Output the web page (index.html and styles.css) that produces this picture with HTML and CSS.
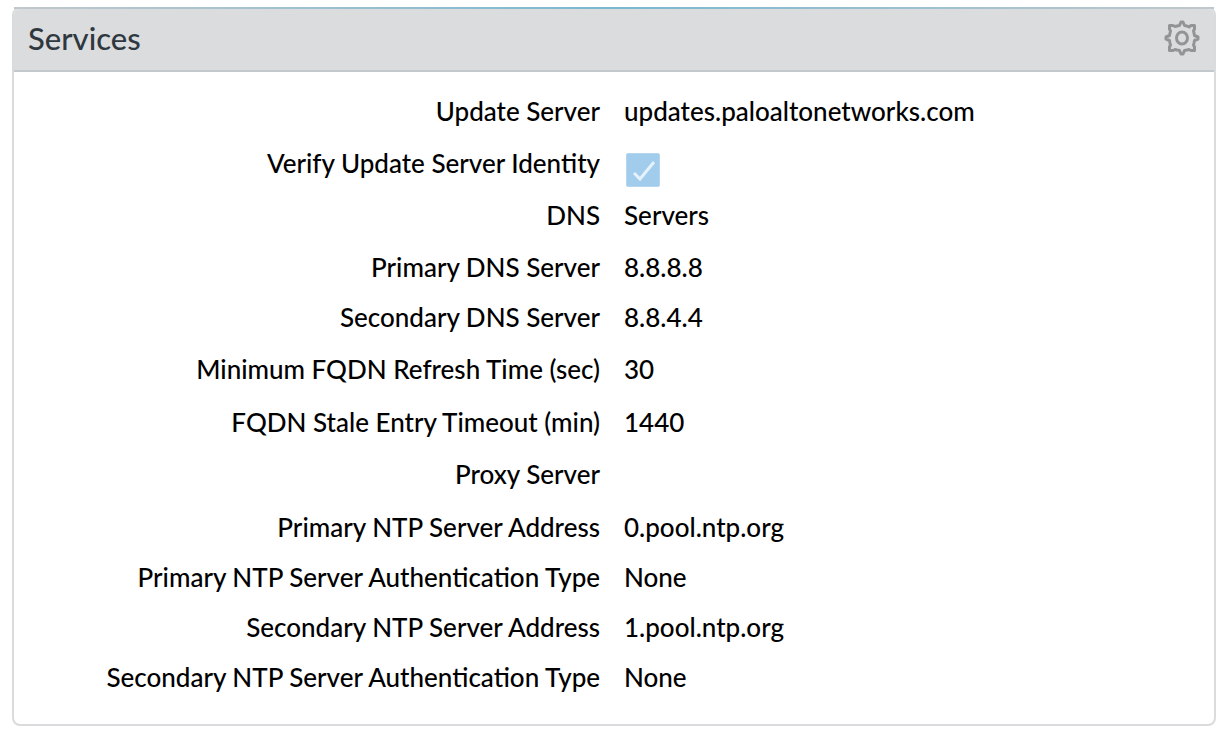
FILE: index.html
```html
<!DOCTYPE html>
<html lang="en">
<head>
<meta charset="utf-8">
<title>Services</title>
<link rel="stylesheet" href="styles.css">
</head>
<body>
<section class="panel">
  <header class="panel-header">
    <h1 class="panel-title">Services</h1>
    <button class="settings" type="button" aria-label="Edit services">
      <svg class="gear" viewBox="0 0 36 36" fill="none" stroke="#929496" stroke-width="3" stroke-linejoin="round">
        <path d="M13 6 L15.500 5.500 L17 2 H19 L20.500 5.500 L23 6 L25 7 L27 5.500 L30.500 5.500 V9 L29.500 11 L30 13 L30.500 15.500 L34 17 V19 L30.500 20.500 L30 23 L29.500 25 L30.500 27 V30.500 H27 L25 29.500 L23 30 L20.500 30.500 L19 34 H17 L15.500 30.500 L13 30 L11 29.500 L9 30.500 H5.500 V27 L6.500 25 L6 23 L5.500 20.500 L2 19 V17 L5.500 15.500 L6 13 L6.500 11 L5.500 9 V5.500 H9 L11 6.500 Z"/>
        <ellipse cx="18" cy="18" rx="5.500" ry="6"/>
      </svg>
    </button>
  </header>
  <dl class="fields">
    <div class="row"><dt>Update Server</dt><dd>updates.paloaltonetworks.com</dd></div>
    <div class="row"><dt><label for="verify">Verify Update Server Identity</label></dt><dd><span class="check"><input id="verify" class="box" type="checkbox" checked disabled><svg class="tick" viewBox="0 0 34 34" fill="none" stroke="#e6f2fb" stroke-width="3"><path d="M8 20l6 6L28 9"/></svg></span></dd></div>
    <div class="row"><dt>DNS</dt><dd>Servers</dd></div>
    <div class="row short"><dt>Primary DNS Server</dt><dd>8.8.8.8</dd></div>
    <div class="row"><dt>Secondary DNS Server</dt><dd>8.8.4.4</dd></div>
    <div class="row tall"><dt>Minimum FQDN Refresh Time (sec)</dt><dd>30</dd></div>
    <div class="row"><dt>FQDN Stale Entry Timeout (min)</dt><dd>1440</dd></div>
    <div class="row tall"><dt>Proxy Server</dt><dd></dd></div>
    <div class="row short"><dt>Primary NTP Server Address</dt><dd>0.pool.ntp.org</dd></div>
    <div class="row short"><dt>Primary NTP Server Authentication Type</dt><dd>None</dd></div>
    <div class="row short"><dt>Secondary NTP Server Address</dt><dd>1.pool.ntp.org</dd></div>
    <div class="row last"><dt>Secondary NTP Server Authentication Type</dt><dd>None</dd></div>
  </dl>
</section>
</body>
</html>
```
FILE: styles.css
```css
* { box-sizing: border-box; }
body { margin: 0; padding: 7px 6px 6px 12px; background: #fff; color: #000; font-family: Lato, sans-serif; font-size: 26px; font-weight: 500; line-height: 32px; }
.panel { position: relative; border: 2px solid #dadbdc; border-radius: 8px; }
.panel::before { content: ""; position: absolute; top: -2px; left: 0; right: 0; height: 2px; background: linear-gradient(90deg, #c0c8cd, #7ab8d0 50%, #c0c8cd); }
.panel-header { display: flex; align-items: flex-start; justify-content: space-between; padding: 11px 14px 14px; background: #dadcde; border-bottom: 2px solid #c3c8cc; border-radius: 6px 6px 0 0; }
.panel-title { margin: 0; font-size: 31px; font-weight: 500; line-height: 36px; color: #30383f; }
.settings { display: flex; padding: 0; border: 0; background: none; }
.gear { width: 36px; height: 36px; }
.fields { margin: 0; padding: 23px 4px 31px 0; }
.row { display: grid; grid-template-columns: 49% 1fr; column-gap: 24px; min-height: 52px; }
.short { min-height: 50px; }
.tall { min-height: 53px; }
.last { min-height: 32px; }
dt { text-align: right; white-space: nowrap; }
dd { margin: 0; }
.check { position: relative; display: block; width: 34px; height: 34px; margin: 6px 2px 0; }
.box { appearance: none; display: block; width: 34px; height: 34px; margin: 0; border: 1px solid #b4d6ee; border-radius: 2px; background: #a1cceb; }
.tick { position: absolute; inset: 0; }
```
